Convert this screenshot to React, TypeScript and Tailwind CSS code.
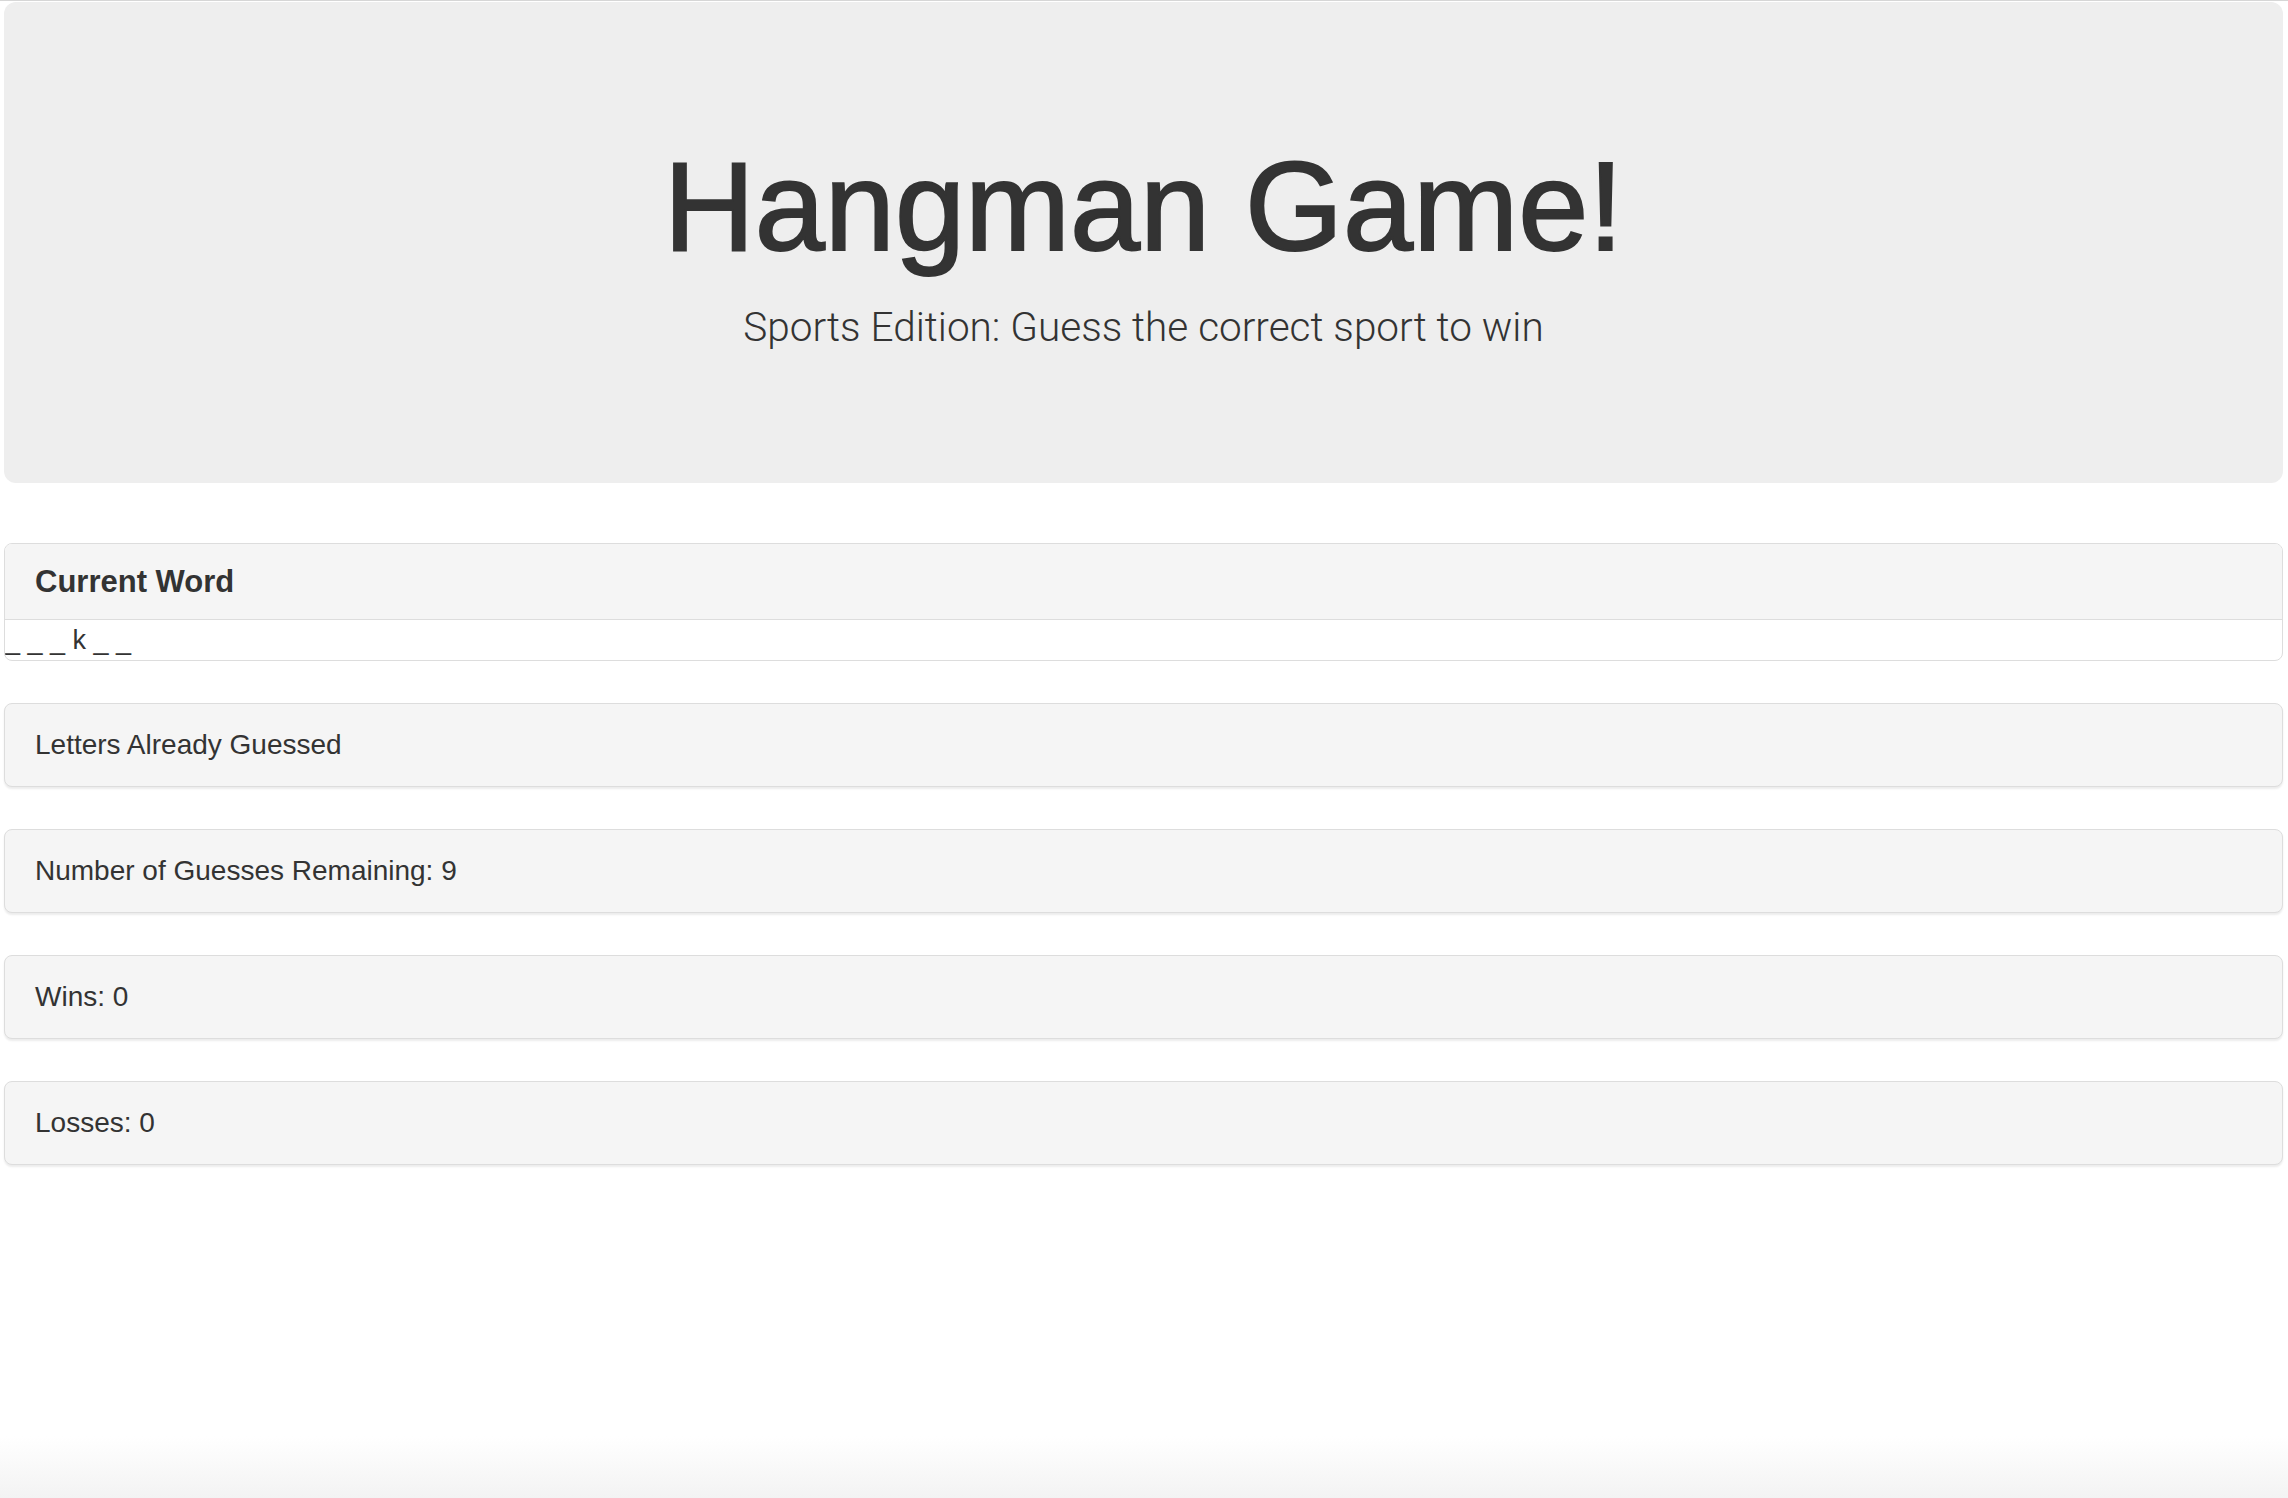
import React from 'react'

const font = { fontFamily: '"Liberation Sans", Arial, sans-serif' }

function StatPanel({ children }: { children: React.ReactNode }) {
  return (
    <div className="mb-[42px] rounded-[8px] border border-[#dddddd] bg-[#f5f5f5] shadow-[0_2px_2px_rgba(0,0,0,0.08)]">
      <div className="px-[30px] py-[21px] text-[28px] leading-[40px] text-[#333333]">{children}</div>
    </div>
  )
}

export default function App() {
  const word = '_ _ _ k _ _'
  const guessesLeft = 9
  const wins = 0
  const losses = 0

  return (
    <div
      className="flex min-h-[1498px] flex-col border-t border-[#d6d6d6] bg-white pt-[1px] text-[#333333]"
      style={font}
    >
      <div className="pl-[4px] pr-[5px]">
        {/* Jumbotron */}
        <div className="mb-[60px] flex flex-col items-center rounded-[12px] bg-[#eeeeee] px-[60px] pt-[96px] pb-[96px]">
          <h1 className="mt-[40px] mb-[20px] text-[126px] leading-[1.1] font-normal [-webkit-text-stroke:2px_#333333]">
            Hangman Game!
          </h1>
          <p
            className="mb-[30px] text-[40.5px] leading-[60px] font-light text-[#333333]"
            style={{ fontFamily: 'Roboto, "Liberation Sans", sans-serif' }}
          >
            Sports Edition: Guess the correct sport to win
          </p>
        </div>

        {/* Current word */}
        <div className="mb-[42px] overflow-hidden rounded-[8px] border border-[#dddddd] bg-white">
          <div className="border-b border-[#dddddd] bg-[#f5f5f5] px-[30px] py-[20px]">
            <h3 className="text-[31px] leading-[35px] font-bold">Current Word</h3>
          </div>
          <div className="text-[27px] leading-[40px]">{word}</div>
        </div>

        <StatPanel>Letters Already Guessed</StatPanel>
        <StatPanel>Number of Guesses Remaining: {guessesLeft}</StatPanel>
        <StatPanel>Wins: {wins}</StatPanel>
        <StatPanel>Losses: {losses}</StatPanel>
      </div>

      <div className="flex-1" />
      <div className="h-[62px] bg-gradient-to-b from-white to-[#f3f3f3]" />
    </div>
  )
}
